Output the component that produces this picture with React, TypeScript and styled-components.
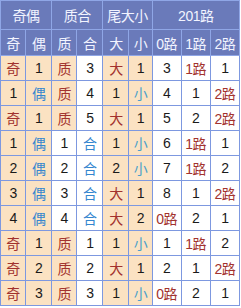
import styled, { createGlobalStyle } from 'styled-components'

type Cell = string

const rows: Cell[][] = [
  ['奇', '1', '质', '3', '大', '1', '3', '1路', '1'],
  ['1', '偶', '质', '4', '1', '小', '4', '1', '2路'],
  ['奇', '1', '质', '5', '大', '1', '5', '2', '2路'],
  ['1', '偶', '1', '合', '1', '小', '6', '1路', '1'],
  ['2', '偶', '2', '合', '2', '小', '7', '1路', '2'],
  ['3', '偶', '3', '合', '大', '1', '8', '1', '2路'],
  ['4', '偶', '4', '合', '大', '2', '0路', '2', '1'],
  ['奇', '1', '质', '1', '1', '小', '1', '1路', '2'],
  ['奇', '2', '质', '2', '大', '1', '2', '1', '2路'],
  ['奇', '3', '质', '3', '1', '小', '0路', '2', '1'],
]

const colWidths = [25, 26, 25, 26, 26, 23, 29, 29, 29]

const tone = (v: string): 'red' | 'blue' | 'light' | 'plain' => {
  if (v === '奇' || v === '质' || v === '大' || v.endsWith('路')) return 'red'
  if (v === '偶' || v === '合') return 'blue'
  if (v === '小') return 'light'
  return 'plain'
}

const isBeige = (col: number, v: string) =>
  col === 0 || col === 1 || col === 4 || col === 5 || (col === 2 && v === '质')

const GlobalStyle = createGlobalStyle`
  body {
    margin: 0;
    background: #ffffff;
  }
`

const App = () => {
  return (
    <>
      <GlobalStyle />
      <Table>
        <colgroup>
          {colWidths.map((w, i) => (
            <col key={i} style={{ width: w }} />
          ))}
        </colgroup>
        <thead>
          <GroupRow>
            <Head colSpan={2}>奇偶</Head>
            <Head colSpan={2}>质合</Head>
            <Head colSpan={2}>尾大小</Head>
            <Head colSpan={3}>201路</Head>
          </GroupRow>
          <SubRow>
            {['奇', '偶', '质', '合', '大', '小', '0路', '1路', '2路'].map((t) => (
              <Head key={t}>{t}</Head>
            ))}
          </SubRow>
        </thead>
        <tbody>
          {rows.map((r, i) => (
            <DataRow key={i}>
              {r.map((v, j) => (
                <Cell key={j} beige={isBeige(j, v)} tone={tone(v)}>
                  {v}
                </Cell>
              ))}
            </DataRow>
          ))}
        </tbody>
      </Table>
    </>
  )
}

export default App

const Table = styled.table`
  border-collapse: collapse;
  table-layout: fixed;
  width: 240px;
  font-family: 'Liberation Sans', 'Noto Sans CJK SC', sans-serif;
  font-size: 14px;
  text-align: center;
`

const GroupRow = styled.tr`
  height: 29px;
`

const SubRow = styled.tr`
  height: 26px;
`

const DataRow = styled.tr`
  height: 25px;
`

const Head = styled.th`
  background: #6a7aba;
  color: #f2f4ff;
  font-weight: normal;
  border: 1px solid #8fa6e6;
  padding: 0;
  letter-spacing: -0.5px;
`

const toneColors = {
  red: '#a2322e',
  blue: '#3586cf',
  light: '#4a9fc9',
  plain: '#1a1a1a',
}

const Cell = styled.td<{ beige: boolean; tone: keyof typeof toneColors }>`
  background: ${(p) => (p.beige ? '#fbe2c2' : '#ffffff')};
  color: ${(p) => toneColors[p.tone]};
  border: 1px solid #7d98e0;
  padding: 0;
  letter-spacing: -0.5px;
`
